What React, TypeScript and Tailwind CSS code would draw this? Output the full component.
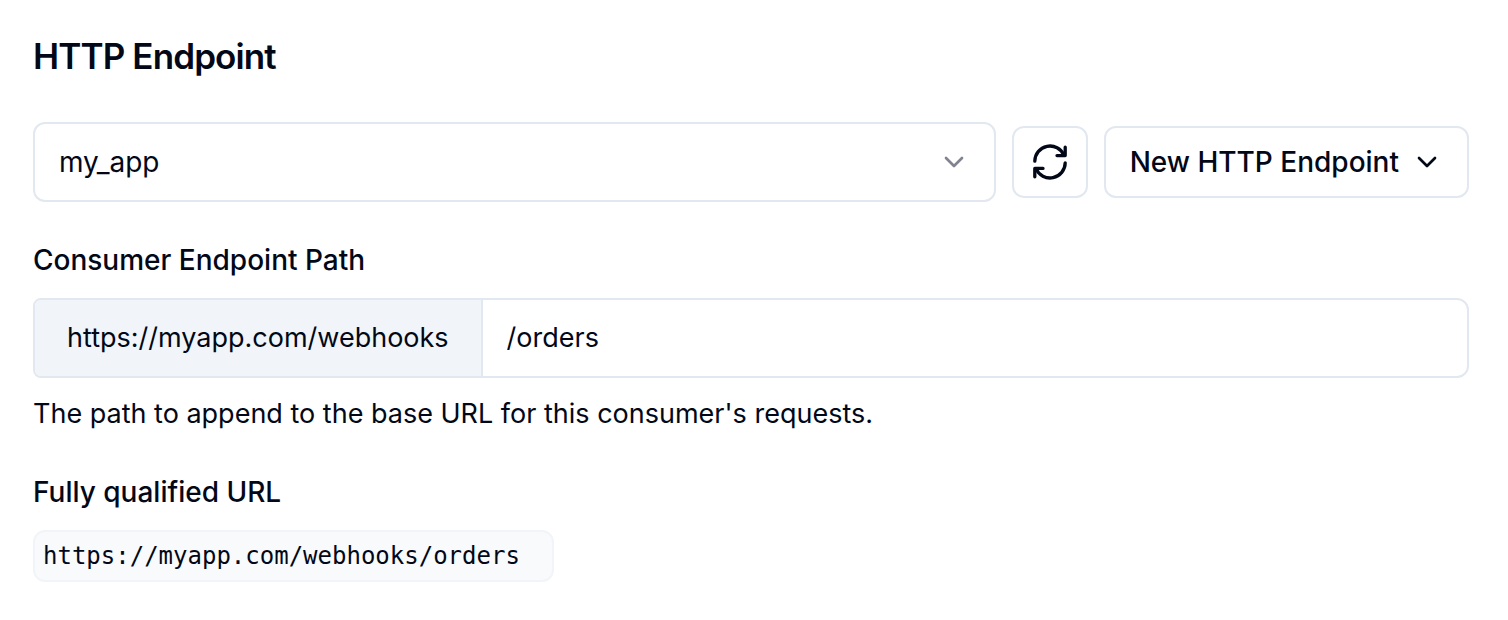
import { useState } from "react";
import { ChevronDown } from "lucide-react";

function RefreshIcon() {
  return (
    <svg
      viewBox="0 0 40 40"
      fill="none"
      stroke="currentColor"
      strokeWidth="3.3"
      strokeLinecap="round"
      strokeLinejoin="round"
      className="size-10"
      aria-hidden="true"
    >
      <path d="M4.8 19.2A15.2 15.2 0 0 1 34 13.3" />
      <path d="M35.2 5.2v8.4H27" />
      <path d="M35.2 20.8A15.2 15.2 0 0 1 6 26.7" />
      <path d="M4.8 34.8v-8.4H13" />
    </svg>
  );
}

export default function App() {
  const [endpoint, setEndpoint] = useState("my_app");
  const [path, setPath] = useState("/orders");

  return (
    <main className="min-h-screen bg-white pt-8 pr-[39px] pb-9 pl-[33px] font-[Inter,sans-serif] text-[28px] leading-10 text-[#020817]">
      <h1 className="text-[35px] leading-12 font-semibold tracking-tight">HTTP Endpoint</h1>

      <div className="mt-[42px] flex items-center gap-4">
        <div className="relative flex-1">
          <select
            aria-label="HTTP endpoint"
            value={endpoint}
            onChange={(e) => setEndpoint(e.target.value)}
            className="block h-20 w-full appearance-none rounded-xl border-2 border-[#e2e8f0] bg-white px-6"
          >
            <option value="my_app">my_app</option>
          </select>
          <ChevronDown className="pointer-events-none absolute top-6 right-[26px] size-8 text-[#808490]" />
        </div>
        <button
          type="button"
          aria-label="Refresh"
          className="flex h-[72px] w-[76px] items-center justify-center rounded-xl border-2 border-[#e2e8f0]"
        >
          <RefreshIcon />
        </button>
        <button
          type="button"
          className="flex h-[72px] items-center gap-3 rounded-xl border-2 border-[#e2e8f0] px-6 font-medium whitespace-nowrap"
        >
          New HTTP Endpoint
          <ChevronDown className="size-8" />
        </button>
      </div>

      <label htmlFor="path" className="mt-[38px] block font-medium">
        Consumer Endpoint Path
      </label>
      <div className="mt-[18px] flex h-20 overflow-hidden rounded-l-lg rounded-r-xl border-2 border-[#e2e8f0] text-[27px]">
        <span className="flex items-center border-r-2 border-[#e2e8f0] bg-[#f1f5f9] px-8">
          https://myapp.com/webhooks
        </span>
        <input
          id="path"
          value={path}
          onChange={(e) => setPath(e.target.value)}
          className="min-w-0 flex-1 px-6 outline-none"
        />
      </div>
      <p className="mt-4 text-[27px]">The path to append to the base URL for this consumer's requests.</p>

      <h2 className="mt-[38px] font-medium">Fully qualified URL</h2>
      <div className="mt-[18px] flex">
        <code className="rounded-xl border-2 border-[#f1f5f9] bg-[#f8fafc] py-1 pr-8 pl-2 font-['DejaVu_Sans_Mono',monospace] text-2xl leading-10">
          https://myapp.com/webhooks{path}
        </code>
      </div>
    </main>
  );
}
